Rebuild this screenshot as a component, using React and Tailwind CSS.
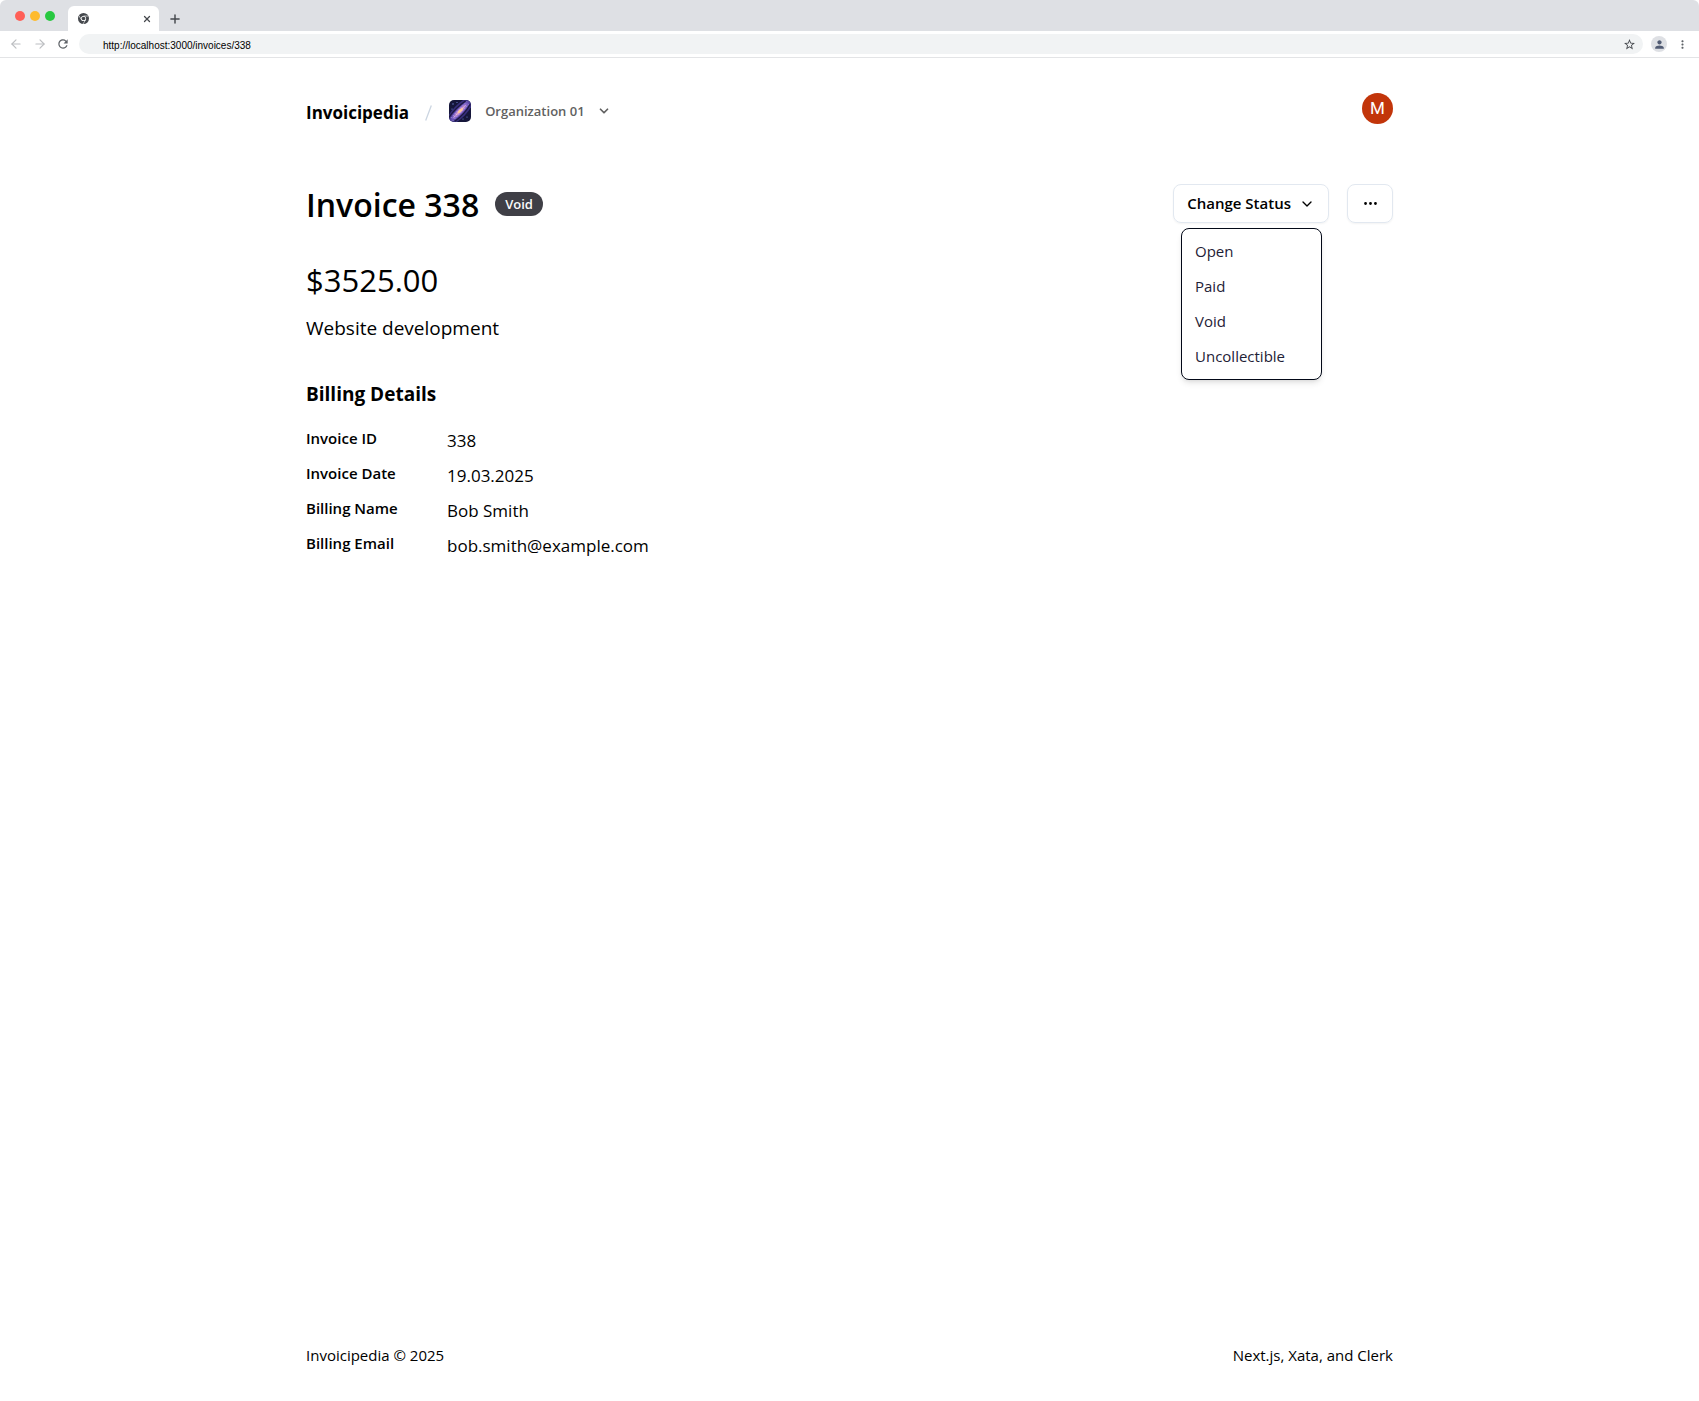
import React from "react";
import { ChevronDown, ArrowLeft, ArrowRight, Plus, X, Ellipsis } from "lucide-react";
import { MdRefresh, MdStarBorder, MdPerson, MdMoreVert } from "react-icons/md";

const details = [
  ["Invoice ID", "338"],
  ["Invoice Date", "19.03.2025"],
  ["Billing Name", "Bob Smith"],
  ["Billing Email", "bob.smith@example.com"],
];

const statuses = ["Open", "Paid", "Void", "Uncollectible"];

function ChromeGlyph() {
  return (
    <svg viewBox="0 0 24 24" className="size-[11px]" aria-hidden="true">
      <circle cx="12" cy="12" r="12" fill="#45484d" />
      <circle cx="12" cy="12" r="5.6" fill="#fff" />
      <circle cx="12" cy="12" r="4" fill="#45484d" />
      <path d="M12 6.6H23M7.3 14.6L1.9 5.4M16.7 14.6L11 24" stroke="#fff" strokeWidth="1.4" />
    </svg>
  );
}

function GalaxyLogo() {
  return (
    <svg viewBox="0 0 22 22" className="size-[22px] shrink-0 rounded-[5px]" aria-hidden="true">
      <defs>
        <radialGradient id="core">
          <stop offset="0" stopColor="#ffd9c4" />
          <stop offset="0.25" stopColor="#d69ad0" />
          <stop offset="0.65" stopColor="#8064cc" stopOpacity="0.9" />
          <stop offset="1" stopColor="#4a3c96" stopOpacity="0.3" />
        </radialGradient>
      </defs>
      <rect width="22" height="22" fill="#15163a" />
      <g transform="rotate(-46 11 11)">
        <ellipse cx="11" cy="11" rx="18" ry="6.5" fill="#40368e" opacity="0.8" />
        <ellipse cx="11" cy="11" rx="16" ry="4" fill="url(#core)" />
        <path d="M-2 7.6Q9 5.5 22 8M0 14.4Q12 16.5 23 13.6" stroke="#0f0d24" strokeWidth="1.2" fill="none" opacity="0.7" />
        <path d="M-1 12.6H22M0 9.3H23" stroke="#c5b5f5" strokeWidth="0.7" strokeDasharray="1 1.7" />
        <path d="M2 11H20" stroke="#e8c3e6" strokeWidth="0.8" strokeDasharray="2 1" />
        <ellipse cx="11.5" cy="11" rx="3.4" ry="1.2" fill="#ffc99a" />
      </g>
      <g fill="#7286dc">
        <circle cx="4" cy="4" r="0.7" />
        <circle cx="8" cy="2.5" r="0.6" />
        <circle cx="18" cy="17" r="0.6" />
        <circle cx="14" cy="19" r="0.6" />
        <circle cx="3" cy="9" r="0.6" />
      </g>
    </svg>
  );
}

function BrowserBar() {
  return (
    <div className="font-['Liberation_Sans',Arial,sans-serif]">
      <div className="flex h-[31px] items-end rounded-t-md bg-[#dee0e4]">
        <div className="flex h-[31px] items-center gap-[5px] pl-[15px] pr-[13px]">
          <span className="size-[10px] rounded-full bg-[#ff5f57]" />
          <span className="size-[10px] rounded-full bg-[#febb2e]" />
          <span className="size-[10px] rounded-full bg-[#28c840]" />
        </div>
        <div className="flex h-[25px] w-[91px] items-center justify-between rounded-t-md bg-white pl-[10px] pr-[7px]">
          <ChromeGlyph />
          <button type="button" aria-label="Close tab" className="text-[#45484d]">
            <X size={10} strokeWidth={3} />
          </button>
        </div>
        <button type="button" aria-label="New tab" className="flex h-[25px] items-center pl-[9px] text-[#45484d]">
          <Plus size={14} strokeWidth={2.5} />
        </button>
      </div>
      <div className="flex h-[27px] items-center border-b border-[#e3e4e6] bg-white pl-[9px] pr-[10px]">
        <button type="button" aria-label="Back" className="mr-[10px] text-[#bcbec1]"><ArrowLeft size={14} /></button>
        <button type="button" aria-label="Forward" className="mr-[9px] text-[#bcbec1]"><ArrowRight size={14} /></button>
        <button type="button" aria-label="Reload" className="mr-[9px] text-[#5f6368]"><MdRefresh size={14} /></button>
        <div className="flex h-[20px] min-w-0 flex-1 items-center rounded-full bg-[#f1f3f4] pl-6 pr-[7px]">
          <input
            aria-label="Address"
            defaultValue="http://localhost:3000/invoices/338"
            className="min-w-0 flex-1 bg-transparent pt-[3px] text-[10px] leading-4 text-black outline-none"
          />
          <button type="button" aria-label="Bookmark" className="text-[#45484d]"><MdStarBorder size={13} /></button>
        </div>
        <span className="ml-2 flex size-4 items-center justify-center rounded-full bg-[#dee0e4] text-[#515b73]">
          <MdPerson size={13} />
        </span>
        <button type="button" aria-label="Browser menu" className="ml-[9px] text-[#5f6368]"><MdMoreVert size={13} /></button>
      </div>
    </div>
  );
}

export default function App() {
  return (
    <div className="flex min-h-screen flex-col bg-white font-['Open_Sans','Noto_Sans',sans-serif] text-black">
      <BrowserBar />
      <div className="mx-auto flex w-full max-w-[1087px] flex-1 flex-col">
        <header className="mt-[35px] flex items-start justify-between">
          <div className="flex h-[36px] items-center">
            <a href="#home" className="pt-1 text-[17px] font-bold leading-6">Invoicipedia</a>
            <svg viewBox="0 0 7 16" className="ml-[16px] mt-1 h-4 w-[7px]" aria-hidden="true">
              <path d="M6.3 0.5L0.7 15.5" stroke="#cbd5e1" strokeWidth="1.3" />
            </svg>
            <button type="button" className="ml-[17px] flex items-center text-[#616161]">
              <GalaxyLogo />
              <span className="ml-[14px] text-[13px] font-semibold leading-5">Organization 01</span>
              <ChevronDown size={14} strokeWidth={3} className="ml-[12px]" />
            </button>
          </div>
          <button type="button" aria-label="Account" className="flex size-[31px] items-center justify-center rounded-full bg-[#c2350a] font-['Roboto',sans-serif] text-[17px] text-white">M</button>
        </header>

        <main className="mt-[55px] flex-1">
          <div className="flex items-center justify-between">
            <div className="flex items-center gap-[16px]">
              <h1 className="pt-[2px] text-[32px] font-semibold leading-[37px]">Invoice 338</h1>
              <span className="rounded-full bg-[#3f3f46] px-[10px] text-[13px] font-semibold leading-6 text-[#fafafa]">Void</span>
            </div>
            <div className="flex gap-[18px]">
              <div className="relative">
                <button type="button" aria-expanded="true" className="flex h-[39px] items-center gap-[8px] rounded-lg border border-[#e2e8f0] px-[13px] text-[15px] font-semibold shadow-xs">
                  Change Status
                  <ChevronDown size={16} strokeWidth={2} />
                </button>
                <div role="menu" className="absolute right-[7px] top-[44px] w-[141px] rounded-lg border border-[#020817] bg-white py-[5px] shadow-md">
                  {statuses.map((s) => (
                    <button key={s} type="button" role="menuitem" className="block h-[35px] w-full px-[13px] text-left text-[15px] leading-[35px] text-[#1e2136]">{s}</button>
                  ))}
                </div>
              </div>
              <button type="button" aria-label="More options" className="flex h-[39px] w-[46px] items-center justify-center rounded-lg border border-[#e2e8f0] shadow-xs">
                <Ellipsis size={17} strokeWidth={2} />
              </button>
            </div>
          </div>

          <p className="mt-[37px] text-[31px] leading-10">$3525.00</p>
          <p className="mt-[14px] text-[19px] leading-7">Website development</p>
          <h2 className="mt-[38px] text-[19px] font-bold leading-7">Billing Details</h2>
          <dl className="mt-[19px] grid gap-[11px]">
            {details.map(([label, value]) => (
              <div key={label} className="flex h-6">
                <dt className="w-[141px] text-[15px] font-semibold leading-[23px]">{label}</dt>
                <dd className="pt-[2px] text-[17px] leading-6">{value}</dd>
              </div>
            ))}
          </dl>
        </main>

        <footer className="flex justify-between pb-[36px] text-[15px] leading-5">
          <p>Invoicipedia © 2025</p>
          <p>Next.js, Xata, and Clerk</p>
        </footer>
      </div>
    </div>
  );
}
